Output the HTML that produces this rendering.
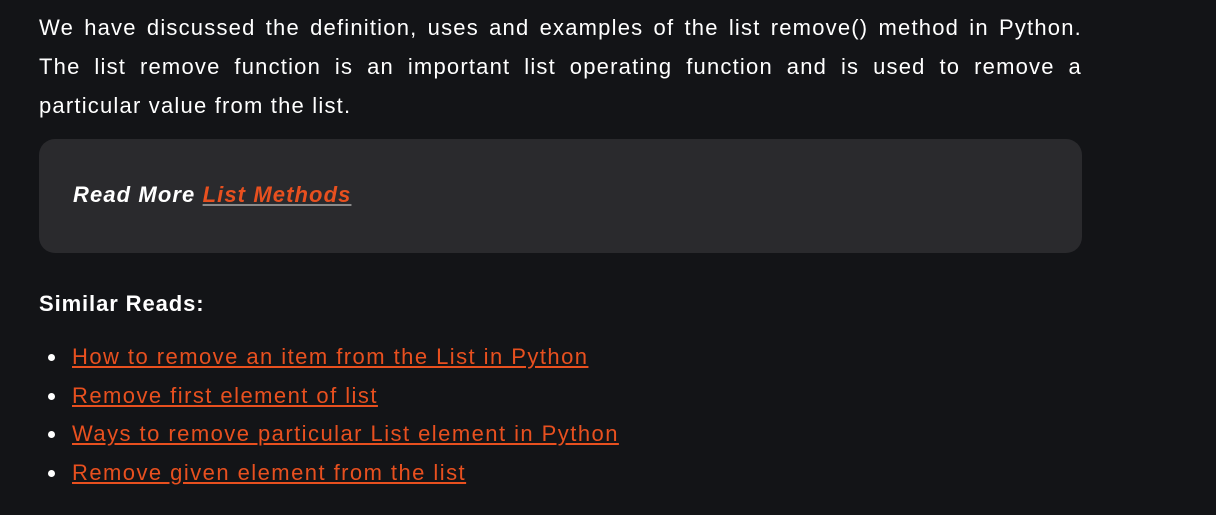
<!DOCTYPE html>
<html><head><meta charset="utf-8"><style>
html,body{margin:0;padding:0;background:#131417;width:1216px;height:515px;overflow:hidden}
body{font-family:"Liberation Sans",sans-serif;color:#fff}
.p{position:absolute;left:39px;width:1043px;font-size:22px;line-height:39px;letter-spacing:1.2px}
.j{text-align:justify;text-align-last:justify;height:39px;overflow:hidden}
.box{position:absolute;left:39px;top:139px;width:1043px;height:114px;background:#2a2a2d;border-radius:16px}
.rm{position:absolute;left:34px;top:41px;font-size:22px;font-weight:bold;font-style:italic;line-height:30px;letter-spacing:1.1px}
.rm a{color:#e8501f;text-decoration:underline;text-decoration-color:#8a8a8a}
h4{position:absolute;left:39px;top:289px;margin:0;font-size:22px;line-height:30px;letter-spacing:0.9px}
ul{position:absolute;left:0;top:338px;margin:0;padding-left:72px;font-size:22px;line-height:38.5px;list-style:none;letter-spacing:1.45px}
li{position:relative}
li::before{content:"";position:absolute;left:-24px;top:16px;width:7px;height:7px;border-radius:50%;background:#fff}
li a{color:#e8501f;text-decoration:underline}
</style></head><body>
<div class="p" style="top:8px">
<div class="j">We have discussed the definition, uses and examples of the list remove() method in Python.</div>
<div class="j">The list remove function is an important list operating function and is used to remove a</div>
<div>particular value from the list.</div>
</div>
<div class="box"><div class="rm">Read More <a>List Methods</a></div></div>
<h4>Similar Reads:</h4>
<ul>
<li><a>How to remove an item from the List in Python</a></li>
<li><a>Remove first element of list</a></li>
<li><a>Ways to remove particular List element in Python</a></li>
<li><a>Remove given element from the list</a></li>
</ul>
</body></html>
